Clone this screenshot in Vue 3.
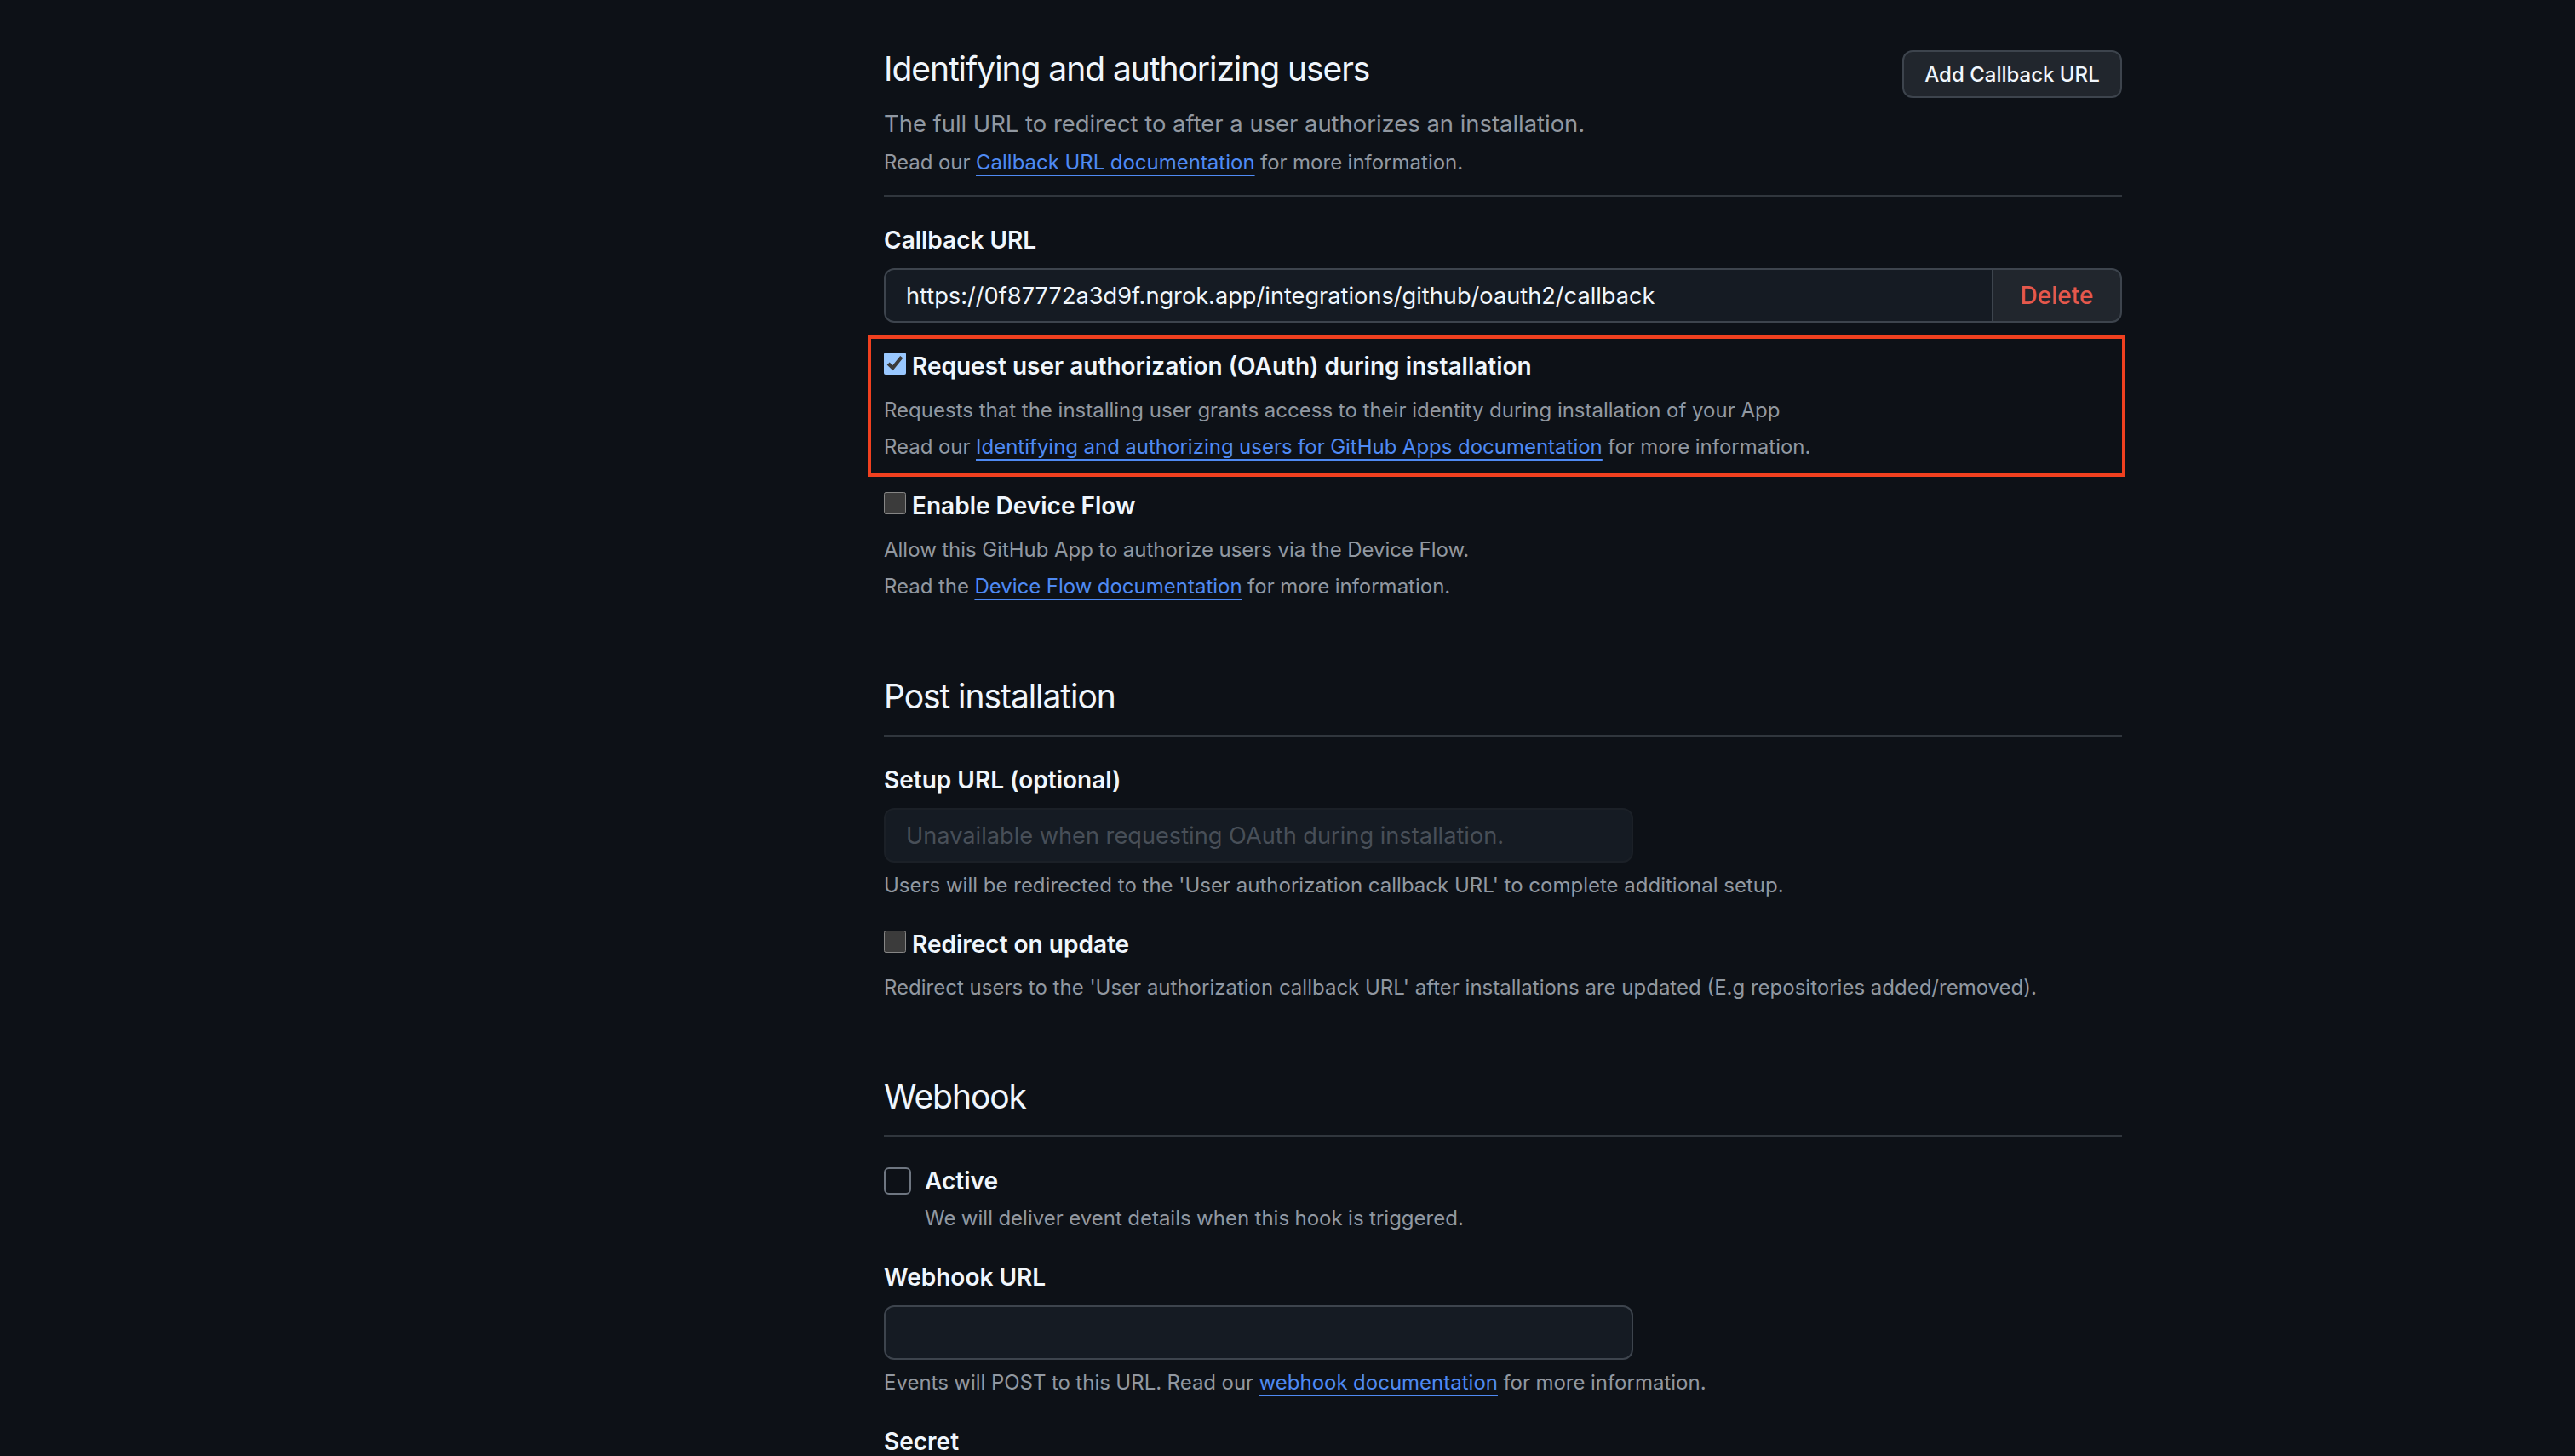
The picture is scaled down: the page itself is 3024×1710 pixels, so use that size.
<template>
  <div class="page">
    <main class="content">
      <header class="section-head first">
        <div class="head-top">
          <h2 class="title">Identifying and authorizing users</h2>
          <button class="btn" type="button">Add Callback URL</button>
        </div>
        <p class="lead">The full URL to redirect to after a user authorizes an installation.</p>
        <p class="note tight">Read our <a href="#" class="link">Callback URL documentation</a> for more information.</p>
      </header>

      <label class="label" for="cb">Callback URL</label>
      <div class="group">
        <input id="cb" class="field grow" type="text" value="https://0f87772a3d9f.ngrok.app/integrations/github/oauth2/callback" />
        <button class="del" type="button">Delete</button>
      </div>

      <div class="highlighted">
        <label class="check-row"><input class="native" type="checkbox" checked /><span>Request user authorization (OAuth) during installation</span></label>
        <p class="hint">Requests that the installing user grants access to their identity during installation of your App</p>
        <p class="hint tight">Read our <a href="#" class="link">Identifying and authorizing users for GitHub Apps documentation</a> for more information.</p>
        <div class="redbox"></div>
      </div>

      <label class="check-row flow"><input class="native" type="checkbox" /><span>Enable Device Flow</span></label>
      <p class="hint tight">Allow this GitHub App to authorize users via the Device Flow.</p>
      <p class="hint tight">Read the <a href="#" class="link">Device Flow documentation</a> for more information.</p>

      <header class="section-head post">
        <h2 class="title">Post installation</h2>
      </header>

      <label class="label" for="setup">Setup URL (optional)</label>
      <input id="setup" class="field narrow disabled" type="text" disabled placeholder="Unavailable when requesting OAuth during installation." />
      <p class="note after-field">Users will be redirected to the 'User authorization callback URL' to complete additional setup.</p>

      <label class="check-row"><input class="native" type="checkbox" /><span>Redirect on update</span></label>
      <p class="hint redirect-hint">Redirect users to the 'User authorization callback URL' after installations are updated (E.g repositories added/removed).</p>

      <header class="section-head hook">
        <h2 class="title">Webhook</h2>
      </header>

      <label class="active-row"><input class="custom" type="checkbox" /><span>Active</span></label>
      <p class="note active-note tight">We will deliver event details when this hook is triggered.</p>

      <label class="label" for="hook">Webhook URL</label>
      <input id="hook" class="field narrow" type="text" />
      <p class="note after-field tight">Events will POST to this URL. Read our <a href="#" class="link">webhook documentation</a> for more information.</p>

      <label class="label">Secret</label>
    </main>
  </div>
</template>

<script setup>
</script>

<style>
html, body { margin: 0; background: #0d1117; }
</style>

<style scoped>
.page {
  width: 3024px;
  height: 1710px;
  overflow: hidden;
  background: #0d1117;
  box-sizing: border-box;
  padding-left: 1038px;
  font-family: Inter, "Liberation Sans", sans-serif;
  color: #f0f6fc;
  color-scheme: dark;
}
.content { width: 1454px; padding-top: 59px; display: flex; flex-direction: column; align-items: stretch; }
p, h2 { margin: 0; }
.head-top { display: flex; justify-content: space-between; align-items: flex-start; }
.title { font-size: 39px; line-height: 44px; font-weight: 400; letter-spacing: -1.06px; }
.btn {
  width: 258px; height: 56px; box-sizing: border-box; font: 500 24px/1 Inter, sans-serif;
  color: #f0f6fc; background: #21262d; border: 2px solid #3d444d; border-radius: 12px; padding: 2px 0 0;
}
.lead { font-size: 27.4px; line-height: 40px; color: #9198a1; margin-top: 10px; }
.note { font-size: 24px; line-height: 36px; color: #9198a1; }
.tight { word-spacing: -0.3px; }
.section-head.first .note { margin-top: 8px; padding-bottom: 20px; border-bottom: 2px solid #30363d; }
.link { color: #4f8af3; text-decoration: underline; text-decoration-thickness: 2px; text-underline-offset: 6px; text-decoration-skip-ink: none; }
.label { display: block; font-size: 28px; line-height: 36px; font-weight: 600; margin-top: 33px; }
.group { display: flex; margin-top: 15px; height: 64px; }
.field {
  box-sizing: border-box; height: 64px; font: 400 27.2px/1 Inter, sans-serif; color: #f0f6fc;
  background: #151b23; border: 2px solid #3d444d; border-radius: 12px; padding: 0 24px; outline: none;
}
.grow { flex: 1; min-width: 0; border-radius: 12px 0 0 12px; }
.del {
  width: 151px; box-sizing: border-box; font: 500 28px/1 Inter, sans-serif; color: #e5584c;
  background: #21262d; border: 2px solid #3d444d; border-left: 0; border-radius: 0 12px 12px 0; padding: 0;
}
.narrow { display: block; width: 880px; margin-top: 15px; }
.disabled { background: #151b23; border-color: #1b2027; }
.disabled::placeholder { color: #484f58; opacity: 1; }
.highlighted { position: relative; margin-top: 33px; }
.check-row { display: flex; align-items: flex-start; font-size: 28px; line-height: 36px; font-weight: 600; margin-top: 33px; }
.highlighted .check-row { margin-top: 0; }
.check-row.flow { margin-top: 30px; }
.native { width: 26px; height: 26px; margin: 2px 7px 0 0; flex: none; }
.hint { font-size: 24px; line-height: 43px; color: #9198a1; }
.check-row + .hint { margin-top: 12px; }
.check-row + .redirect-hint { margin-top: 11px; }
.redbox {
  position: absolute; left: -19px; right: -4px; top: -18px; bottom: -14px;
  border: 4px solid #f0401f; pointer-events: none;
}
.section-head.post { margin-top: 86px; padding-bottom: 23px; border-bottom: 2px solid #30363d; }
.section-head.hook { margin-top: 85px; padding-bottom: 23px; border-bottom: 2px solid #30363d; }
.after-field { margin-top: 9px; }
.active-row { display: flex; align-items: flex-start; font-size: 28px; line-height: 36px; font-weight: 600; margin-top: 34px; }
.custom {
  appearance: none; width: 32px; height: 32px; box-sizing: border-box; margin: 2px 16px 0 0; flex: none;
  background: #0d1117; border: 2px solid #6e7681; border-radius: 6px;
}
.active-note { padding-left: 48px; margin-top: 8px; }
</style>
